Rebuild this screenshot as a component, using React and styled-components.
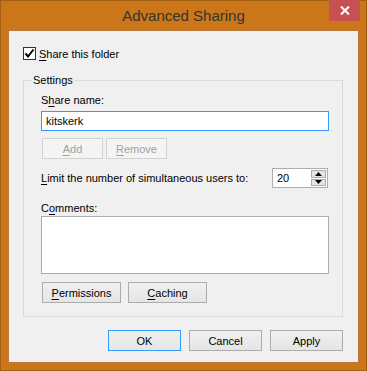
import styled, { createGlobalStyle } from "styled-components";

const GlobalStyle = createGlobalStyle`
  html, body {
    margin: 0;
    padding: 0;
    background: #cb7719;
  }
  * {
    box-sizing: border-box;
  }
`;

const font = `"Liberation Sans", Arial, sans-serif`;

const Window = styled.div`
  width: 367px;
  height: 371px;
  background: #cb7719;
  border: 1px solid #a35f12;
  display: flex;
  flex-direction: column;
  font-family: ${font};
  font-size: 11px;
  color: #000;
`;

const TitleBar = styled.div`
  height: 29px;
  display: flex;
  align-items: flex-start;
  position: relative;
`;

const Title = styled.div`
  flex: 1;
  text-align: center;
  font-size: 15px;
  color: #333;
  padding-top: 6px;
`;

const CloseButton = styled.div`
  position: absolute;
  top: -1px;
  right: 6px;
  width: 31px;
  height: 21px;
  background: #c75050;
  display: flex;
  align-items: center;
  justify-content: center;
`;

const Client = styled.div`
  flex: 1;
  margin: 0 7px 7px 7px;
  background: #f0f0f0;
  border: 1px solid #b8793a;
  padding: 16px 15px 0 14px;
  display: flex;
  flex-direction: column;
`;

const CheckRow = styled.label`
  display: flex;
  align-items: center;
  gap: 3px;
  height: 13px;
`;

const Box = styled.span`
  width: 13px;
  height: 13px;
  border: 1px solid #333;
  background: #fff;
  display: flex;
  align-items: center;
  justify-content: center;
`;

const Key = styled.span`
  text-decoration: underline;
  text-underline-offset: 2px;
`;

const Group = styled.fieldset`
  margin: 13px 0 0 0;
  padding: 6px 13px 13px 17px;
  border: 1px solid #dcdcdc;
  min-width: 0;
  display: flex;
  flex-direction: column;
`;

const Legend = styled.legend`
  padding: 0 1px;
  margin-left: -9px;
  line-height: 14px;
`;

const Label = styled.div`
  line-height: 15px;
  margin-top: ${(p) => p.$top || 0}px;
`;

const TextInput = styled.div`
  height: 20px;
  margin-top: 3px;
  border: 1px solid ${(p) => (p.$focus ? "#3399ff" : "#abadb3")};
  background: #fff;
  padding: 0 4px;
  display: flex;
  align-items: center;
`;

const TextArea = styled.div`
  height: 58px;
  border: 1px solid #abadb3;
  background: #fff;
`;

const ButtonRow = styled.div`
  display: flex;
  gap: ${(p) => p.$gap || 3}px;
  margin-top: ${(p) => p.$top || 0}px;
  padding-left: ${(p) => p.$left || 0}px;
  justify-content: ${(p) => (p.$end ? "flex-end" : "flex-start")};
`;

const Button = styled.div`
  width: ${(p) => p.$w}px;
  height: 21px;
  border: 1px solid ${(p) => (p.$default ? "#3399ff" : p.$disabled ? "#d2d2d2" : "#acacac")};
  background: ${(p) => (p.$disabled ? "#f4f4f4" : "linear-gradient(#f0f0f0, #e5e5e5)")};
  color: ${(p) => (p.$disabled ? "#a0a0a0" : "#000")};
  display: flex;
  align-items: center;
  justify-content: center;
`;

const LimitRow = styled.div`
  display: flex;
  align-items: center;
  justify-content: space-between;
  margin-top: 9px;
  height: 20px;
`;

const Spin = styled.div`
  width: 56px;
  height: 20px;
  border: 1px solid #abadb3;
  background: #fff;
  display: flex;
  margin-right: 1px;
`;

const SpinValue = styled.div`
  flex: 1;
  display: flex;
  align-items: center;
  padding-left: 4px;
`;

const SpinButtons = styled.div`
  width: 16px;
  display: flex;
  flex-direction: column;
  gap: 1px;
  padding: 1px 1px 1px 0;
  background: #fff;
`;

const SpinButton = styled.div`
  flex: 1;
  background: #e5e5e5;
  border: 1px solid #acacac;
  display: flex;
  align-items: center;
  justify-content: center;
`;

const Arrow = ({ down }) => (
  <svg width="7" height="4" viewBox="0 0 7 4">
    <path d={down ? "M0 0 H7 L3.5 4 Z" : "M0 4 H7 L3.5 0 Z"} fill="#000" />
  </svg>
);

export default function App() {
  return (
    <>
      <GlobalStyle />
      <Window>
        <TitleBar>
          <Title>Advanced Sharing</Title>
          <CloseButton>
            <svg width="10" height="9" viewBox="0 0 10 9">
              <path d="M1 0.5 L9 8.5 M9 0.5 L1 8.5" stroke="#fff" strokeWidth="2" />
            </svg>
          </CloseButton>
        </TitleBar>
        <Client>
          <CheckRow>
            <Box>
              <svg width="11" height="11" viewBox="0 0 11 11">
                <path d="M1.5 5.5 L4 8.5 L9.5 1.5" stroke="#000" strokeWidth="2" fill="none" />
              </svg>
            </Box>
            <span>
              <Key>S</Key>hare this folder
            </span>
          </CheckRow>
          <Group>
            <Legend>Settings</Legend>
            <Label>
              S<Key>h</Key>are name:
            </Label>
            <TextInput $focus>kitskerk</TextInput>
            <ButtonRow $top={7} $left={1}>
              <Button $w={61} $disabled>
                <Key>A</Key>dd
              </Button>
              <Button $w={61} $disabled>
                <Key>R</Key>emove
              </Button>
            </ButtonRow>
            <LimitRow>
              <span>
                <Key>L</Key>imit the number of simultaneous users to:
              </span>
              <Spin>
                <SpinValue>20</SpinValue>
                <SpinButtons>
                  <SpinButton>
                    <Arrow />
                  </SpinButton>
                  <SpinButton>
                    <Arrow down />
                  </SpinButton>
                </SpinButtons>
              </Spin>
            </LimitRow>
            <Label $top={13}>
              C<Key>o</Key>mments:
            </Label>
            <TextArea />
            <ButtonRow $top={8} $left={1} $gap={7}>
              <Button $w={79}>
                <Key>P</Key>ermissions
              </Button>
              <Button $w={79}>
                <Key>C</Key>aching
              </Button>
            </ButtonRow>
          </Group>
          <ButtonRow $top={13} $gap={8} $end>
            <Button $w={73} $default>OK</Button>
            <Button $w={73}>Cancel</Button>
            <Button $w={73}>Apply</Button>
          </ButtonRow>
        </Client>
      </Window>
    </>
  );
}
